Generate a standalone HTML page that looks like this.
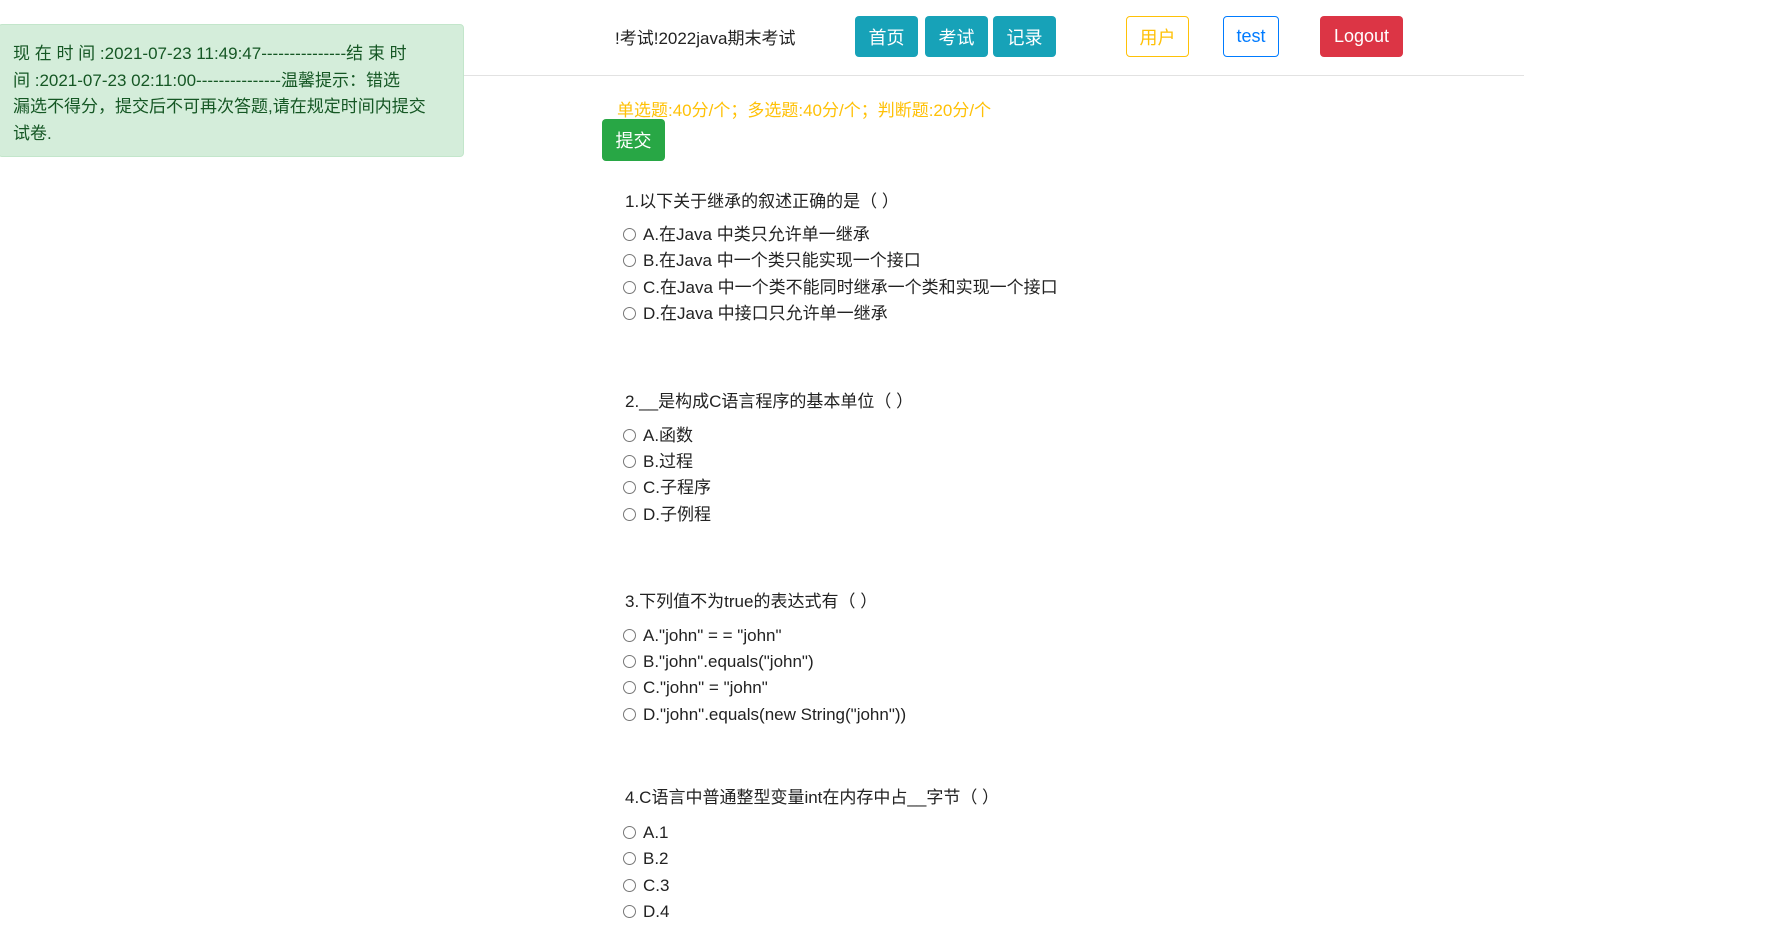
<!DOCTYPE html>
<html><head><meta charset="utf-8"><style>
body{margin:0;width:1780px;height:930px;background:#fff;font-family:"Liberation Sans","Noto Sans CJK SC",sans-serif;color:#212529;position:relative;overflow:hidden}
.a{position:absolute;white-space:nowrap}
.alert{position:absolute;left:-2px;top:24px;width:466px;height:133px;background:#d4edda;border:1px solid #c3e6cb;border-radius:4px;box-sizing:border-box;color:#155724;font-size:17px;line-height:26.5px;padding:16px 10px 0 14px;white-space:nowrap;overflow:hidden}
.btn{position:absolute;top:16px;height:41px;border-radius:4px;box-sizing:border-box;font-size:18px;display:flex;align-items:center;justify-content:center}
.q{position:absolute;left:625px;font-size:17px;line-height:22px;white-space:nowrap;color:#222}
.o{position:absolute;left:623px;font-size:17px;line-height:22px;white-space:nowrap;color:#222}
.o i{display:inline-block;width:11px;height:11px;border:1px solid #777;border-radius:50%;vertical-align:-1px;margin-right:7px}
</style></head><body>
<div class="alert">现 在 时 间 :2021-07-23 11:49:47---------------结 束 时<br>间 :2021-07-23 02:11:00---------------温馨提示：错选<br>漏选不得分，提交后不可再次答题,请在规定时间内提交<br>试卷.</div>
<div class="a" style="left:464px;top:75px;width:1060px;height:1px;background:#e2e2e2"></div>
<div class="a" style="left:615px;top:24px;font-size:17px;color:#222">!考试!2022java期末考试</div>
<div class="btn" style="left:855px;width:63px;background:#17a2b8;color:#fff">首页</div>
<div class="btn" style="left:925px;width:63px;background:#17a2b8;color:#fff">考试</div>
<div class="btn" style="left:993px;width:63px;background:#17a2b8;color:#fff">记录</div>
<div class="btn" style="left:1126px;width:63px;border:1px solid #ffc107;color:#ffc107">用户</div>
<div class="btn" style="left:1223px;width:56px;border:1px solid #007bff;color:#007bff">test</div>
<div class="btn" style="left:1320px;width:83px;background:#dc3545;color:#fff">Logout</div>
<div class="a" style="left:617px;top:96px;font-size:17px;color:#ffc107">单选题:40分/个；多选题:40分/个；判断题:20分/个</div>
<div class="btn" style="left:602px;top:119px;width:63px;height:42px;background:#28a745;color:#fff">提交</div>

<div class="q" style="top:191px">1.以下关于继承的叙述正确的是（ ）</div>
<div class="o" style="top:224px"><i></i>A.在Java 中类只允许单一继承</div>
<div class="o" style="top:250px"><i></i>B.在Java 中一个类只能实现一个接口</div>
<div class="o" style="top:277px"><i></i>C.在Java 中一个类不能同时继承一个类和实现一个接口</div>
<div class="o" style="top:303px"><i></i>D.在Java 中接口只允许单一继承</div>

<div class="q" style="top:391px">2.__是构成C语言程序的基本单位（ ）</div>
<div class="o" style="top:425px"><i></i>A.函数</div>
<div class="o" style="top:451px"><i></i>B.过程</div>
<div class="o" style="top:477px"><i></i>C.子程序</div>
<div class="o" style="top:504px"><i></i>D.子例程</div>

<div class="q" style="top:591px">3.下列值不为true的表达式有（ ）</div>
<div class="o" style="top:625px"><i></i>A."john" = = "john"</div>
<div class="o" style="top:651px"><i></i>B."john".equals("john")</div>
<div class="o" style="top:677px"><i></i>C."john" = "john"</div>
<div class="o" style="top:704px"><i></i>D."john".equals(new String("john"))</div>

<div class="q" style="top:787px">4.C语言中普通整型变量int在内存中占__字节（ ）</div>
<div class="o" style="top:822px"><i></i>A.1</div>
<div class="o" style="top:848px"><i></i>B.2</div>
<div class="o" style="top:875px"><i></i>C.3</div>
<div class="o" style="top:901px"><i></i>D.4</div>
</body></html>
